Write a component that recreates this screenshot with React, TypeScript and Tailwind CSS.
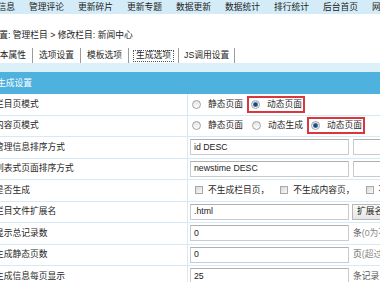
import React from "react";

function Radio({ checked }: { checked?: boolean }) {
  return (
    <span className="w-[9px] h-[9px] rounded-full border border-[#a3a3a3] bg-linear-to-b from-[#e4e4e4] to-[#fdfdfd] flex items-center justify-center shrink-0">
      {checked && (
        <span className="w-[5px] h-[5px] rounded-full bg-[radial-gradient(circle,#1b4a80_35%,#74acd9_100%)]" />
      )}
    </span>
  );
}

function Check() {
  return (
    <span className="w-[8px] h-[8px] border border-[#a8a8a8] bg-linear-to-br from-[#d8d8d8] to-[#fafafa] shrink-0" />
  );
}

function RadioItem({ label, checked, boxed, first }: { label: string; checked?: boolean; boxed?: boolean; first?: boolean }) {
  if (boxed) {
    return (
      <span className="ml-[4px] flex items-center h-[17px] border-2 border-[#d9363e] pl-[2px] pr-[1px] shrink-0">
        <Radio checked={checked} />
        <span className="ml-[7px]">{label}</span>
      </span>
    );
  }
  return (
    <span className={`${first ? "ml-[2px]" : "ml-[9px]"} flex items-center shrink-0`}>
      <Radio checked={checked} />
      <span className="ml-[7px]">{label}</span>
    </span>
  );
}

function Input({ value, w = "w-[159px]" }: { value?: string; w?: string }) {
  return (
    <span className={`${w} h-[16px] shrink-0 border border-[#cbcbcb] border-t-[#b0b0b0] bg-white flex items-center pl-[3px] text-[#222]`}>
      {value}
    </span>
  );
}

function Row({ label, children }: { label: string; children: React.ReactNode }) {
  return (
    <div className="flex h-[21.5px] border-b border-[#d6eaf5] overflow-hidden">
      <div className="w-[188px] shrink-0 border-r border-[#d6eaf5] flex items-center">
        <span className="ml-[-5px] whitespace-nowrap">{label}</span>
      </div>
      <div className="flex-1 flex items-center pl-[2px] whitespace-nowrap overflow-hidden">{children}</div>
    </div>
  );
}

export default function App() {
  const nav = ["管理信息", "管理评论", "更新碎片", "更新专题", "数据更新", "数据统计", "排行统计", "后台首页", "网站首页"];
  return (
    <div className="w-[380px] h-[282px] overflow-hidden bg-white text-[8.75px] leading-none text-[#1f1f1f] font-['Liberation_Sans','Noto_Sans_CJK_SC',sans-serif]">
      <div className="h-[14px] bg-[#d4ecf8] flex items-center gap-[14px] whitespace-nowrap overflow-hidden">
        {nav.map((n, i) => (
          <span key={n} className={`${i === 0 ? "ml-[-20px]" : ""} shrink-0 text-[#222]`}>
            {n}
          </span>
        ))}
      </div>
      <div className="h-[14px]" />
      <div className="h-[14px] flex items-center whitespace-nowrap">
        <span className="ml-[-27px] text-[#222]">当前位置: 管理栏目 &gt; 修改栏目: 新闻中心</span>
      </div>
      <div className="h-[6px]" />
      <div className="h-[15px] flex items-stretch whitespace-nowrap text-[#1f1f1f]">
        <span className="ml-[-15px] px-[6px] flex items-center">基本属性</span>
        <span className="w-px bg-[#9c9c9c]" />
        <span className="px-[6px] flex items-center">选项设置</span>
        <span className="w-px bg-[#9c9c9c]" />
        <span className="px-[6px] flex items-center">模板选项</span>
        <span className="w-px bg-[#9c9c9c]" />
        <span className="px-[4px] flex items-center">
          <span className="px-[2px] h-[12px] flex items-center border border-dotted border-[#555]">生成选项</span>
        </span>
        <span className="w-px bg-[#9c9c9c]" />
        <span className="px-[5px] flex items-center">JS调用设置</span>
        <span className="w-px bg-[#9c9c9c]" />
      </div>
      <div className="h-[9px] bg-[#dcf0fa]" />
      <div className="h-[22px] bg-[#4eb1de] flex items-center whitespace-nowrap">
        <span className="ml-[-3px] text-white">生成设置</span>
      </div>
      <Row label="栏目页模式">
        <RadioItem first label="静态页面" />
        <RadioItem boxed checked label="动态页面" />
      </Row>
      <Row label="内容页模式">
        <RadioItem first label="静态页面" />
        <RadioItem label="动态生成" />
        <RadioItem boxed checked label="动态页面" />
      </Row>
      <Row label="管理信息排序方式">
        <Input value="id DESC" />
        <span className="ml-[4px]">
          <Input />
        </span>
      </Row>
      <Row label="列表式页面排序方式">
        <Input value="newstime DESC" />
        <span className="ml-[4px]">
          <Input />
        </span>
      </Row>
      <Row label="是否生成">
        <span className="ml-[5px] flex items-center shrink-0">
          <Check />
          <span className="ml-[5px]">不生成栏目页，</span>
        </span>
        <span className="ml-[11px] flex items-center shrink-0">
          <Check />
          <span className="ml-[5px]">不生成内容页，</span>
        </span>
        <span className="ml-[11px] flex items-center shrink-0">
          <Check />
          <span className="ml-[5px]">不生成JS调用</span>
        </span>
      </Row>
      <Row label="栏目文件扩展名">
        <Input value=".html" />
        <span className="ml-[3px] h-[16px] shrink-0 border border-[#b8b8b8] bg-linear-to-b from-[#fbfbfb] to-[#e6e6e6] flex items-center px-[4px] text-[#222]">
          扩展名
        </span>
      </Row>
      <Row label="显示总记录数">
        <Input value="0" />
        <span className="ml-[4px] text-[#555]">条</span>
        <span className="text-[#8a8a8a]">(0为不显示)</span>
      </Row>
      <Row label="生成静态页数">
        <Input value="0" />
        <span className="ml-[4px] text-[#555]">页</span>
        <span className="text-[#8a8a8a]">(超过页数的为动态)</span>
      </Row>
      <Row label="生成信息每页显示">
        <Input value="25" />
        <span className="ml-[4px] text-[#555]">条记录</span>
      </Row>
    </div>
  );
}
